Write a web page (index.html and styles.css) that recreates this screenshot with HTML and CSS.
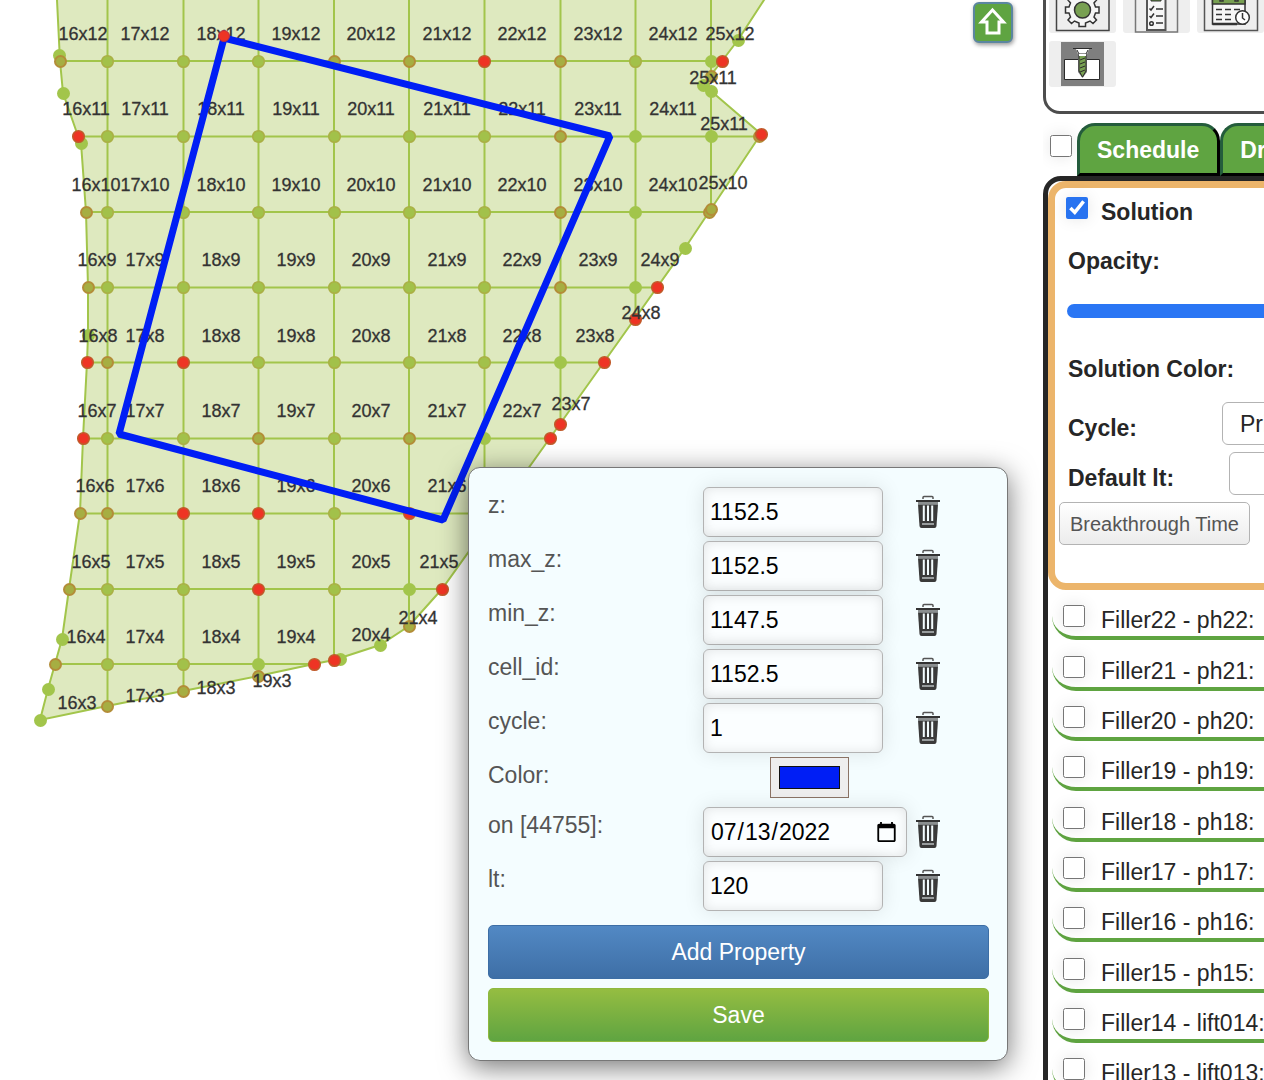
FILE: index.html
```html
<!DOCTYPE html>
<html lang="en">
<head>
<meta charset="utf-8">
<title>Cell schedule</title>
<link rel="stylesheet" href="styles.css">
</head>
<body>
<svg class="defs" aria-hidden="true">
  <symbol id="trash" viewBox="0 0 26 34">
    <path d="M8 4V2.500Q8 1.500 9 1.500H17Q18 1.500 18 2.500V4" fill="none" stroke="#555" stroke-width="1.500"/>
    <path d="M1 5H25V7H1Z" fill="#333"/>
    <path d="M3 7H23V9.500H3Z" fill="#8b8f90"/>
    <path d="M3 9.500H23L21.500 31Q21.300 33 19.500 33H6.500Q4.700 33 4.500 31Z" fill="#3a3a3a"/>
    <path d="M8.800 10.500V26M13 10.500V26M17.200 10.500V26" stroke="#f4fdff" stroke-width="2"/>
    <path d="M7 29H19" stroke="#b9bebf" stroke-width="1.500"/>
  </symbol>
</svg>
<div class="app">
  <main class="map">
    <svg class="field" width="800" height="740" viewBox="0 0 800 740" role="img" aria-label="Cell grid">
      <defs>
        <marker id="n-green" markerUnits="userSpaceOnUse" markerWidth="16" markerHeight="16" refX="7.500" refY="7.500"><circle cx="8" cy="8" r="6.500" fill="#a2c54b"/></marker>
        <marker id="n-olive" markerUnits="userSpaceOnUse" markerWidth="16" markerHeight="16" refX="7.500" refY="7.500"><circle cx="8" cy="8" r="5.800" fill="#a2c14a" stroke="#aab045" stroke-width="1.500"/></marker>
        <marker id="n-brown" markerUnits="userSpaceOnUse" markerWidth="16" markerHeight="16" refX="7.500" refY="7.500"><circle cx="8" cy="8" r="5.500" fill="#a6ae42" stroke="#b38d38" stroke-width="2"/></marker>
        <marker id="n-red" markerUnits="userSpaceOnUse" markerWidth="16" markerHeight="16" refX="7.500" refY="7.500"><circle cx="8" cy="8" r="5.800" fill="#ee3424" stroke="#c05a2a" stroke-width="1.500"/></marker>
        <clipPath id="area"><path d="M57 0L60 61 63 93 78 136 81 143 86 212 88 287 88 335 87 362 83 438 80 513 69 589 62 639 55 664 48 689 40 720 107 706 183 691 258 676 314 664 334 660 380 645 409 626 442 589 550 438 604 362 685 248 761 134 711 91 703 85 722 61 738 40 764 0Z"/></clipPath>
      </defs>
      <path class="land" d="M57 -5L57 0 60 61 63 93 78 136 81 143 86 212 88 287 88 335 87 362 83 438 80 513 69 589 62 639 55 664 48 689 40 720 107 706 183 691 258 676 314 664 334 660 380 645 409 626 442 589 550 438 604 362 685 248 761 134 711 91 703 85 722 61 738 40 764 0 768 -5Z"/>
      <path class="grid" clip-path="url(#area)" d="M107.500 0V740M183.500 0V740M258.500 0V740M334 0V740M409 0V740M484.500 0V740M560.500 0V740M635.500 0V740M711 0V740M0 61H800M0 136.500H800M0 212H800M0 287.500H800M0 362.500H800M0 438.500H800M0 513.500H800M0 589H800M0 664H800"/>
      <path class="nodes green" d="M59 55L63 93 738 40 711 61 703 85 711 91 81 143 635 136 711 136 635 212 685 248 635 287 88 335 560 362 484 438 409 589 258 664 340 659 380 645 62 639 48 689 40 720"/>
      <path class="nodes olive" d="M107 61L183 61 258 61 635 61 107 136 183 136 258 136 334 136 409 136 484 136 107 212 183 212 258 212 334 212 409 212 484 212 107 287 183 287 258 287 334 287 409 287 484 287 258 362 334 362 409 362 484 362 107 438 183 438 334 438 334 513 107 589 183 589 334 589 107 664 183 664"/>
      <path class="nodes brown" d="M60 61L334 61 409 61 560 61 711 76 560 136 759 136 86 212 560 212 709 212 711 209 88 287 560 287 107 362 258 438 409 438 80 513 107 513 69 589 55 664 258 676 409 626 107 706 183 691"/>
      <path class="nodes red" d="M484 61L722 61 78 136 761 134 657 287 635 319 87 362 183 362 604 362 83 438 560 424 550 438 183 513 258 513 409 513 258 589 442 589 314 664 334 660"/>
      <g class="cells">
        <text x="83" y="40">16x12</text><text x="145" y="40">17x12</text><text x="221" y="40">18x12</text><text x="296" y="40">19x12</text><text x="371" y="40">20x12</text><text x="447" y="40">21x12</text><text x="522" y="40">22x12</text><text x="598" y="40">23x12</text><text x="673" y="40">24x12</text><text x="730" y="40">25x12</text>
        <text x="713" y="84">25x11</text>
        <text x="86" y="115">16x11</text><text x="145" y="115">17x11</text><text x="221" y="115">18x11</text><text x="296" y="115">19x11</text><text x="371" y="115">20x11</text><text x="447" y="115">21x11</text><text x="522" y="115">22x11</text><text x="598" y="115">23x11</text><text x="673" y="115">24x11</text><text x="724" y="130">25x11</text>
        <text x="96" y="191">16x10</text><text x="145" y="191">17x10</text><text x="221" y="191">18x10</text><text x="296" y="191">19x10</text><text x="371" y="191">20x10</text><text x="447" y="191">21x10</text><text x="522" y="191">22x10</text><text x="598" y="191">23x10</text><text x="673" y="191">24x10</text><text x="723" y="189">25x10</text>
        <text x="97" y="266">16x9</text><text x="145" y="266">17x9</text><text x="221" y="266">18x9</text><text x="296" y="266">19x9</text><text x="371" y="266">20x9</text><text x="447" y="266">21x9</text><text x="522" y="266">22x9</text><text x="598" y="266">23x9</text><text x="660" y="266">24x9</text>
        <text x="641" y="319">24x8</text>
        <text x="98" y="342">16x8</text><text x="145" y="342">17x8</text><text x="221" y="342">18x8</text><text x="296" y="342">19x8</text><text x="371" y="342">20x8</text><text x="447" y="342">21x8</text><text x="522" y="342">22x8</text><text x="595" y="342">23x8</text>
        <text x="97" y="417">16x7</text><text x="145" y="417">17x7</text><text x="221" y="417">18x7</text><text x="296" y="417">19x7</text><text x="371" y="417">20x7</text><text x="447" y="417">21x7</text><text x="522" y="417">22x7</text><text x="571" y="410">23x7</text>
        <text x="95" y="492">16x6</text><text x="145" y="492">17x6</text><text x="221" y="492">18x6</text><text x="296" y="492">19x6</text><text x="371" y="492">20x6</text><text x="447" y="492">21x6</text>
        <text x="91" y="568">16x5</text><text x="145" y="568">17x5</text><text x="221" y="568">18x5</text><text x="296" y="568">19x5</text><text x="371" y="568">20x5</text><text x="439" y="568">21x5</text>
        <text x="86" y="643">16x4</text><text x="145" y="643">17x4</text><text x="221" y="643">18x4</text><text x="296" y="643">19x4</text><text x="371" y="641">20x4</text><text x="418" y="624">21x4</text>
        <text x="77" y="709">16x3</text><text x="145" y="702">17x3</text><text x="216" y="694">18x3</text><text x="272" y="687">19x3</text>
      </g>
      <path class="shape" d="M224 38L610 136 443 520 119 434Z"/>
      <circle cx="224" cy="36" r="5.500" fill="#ee3424" stroke="#b0304a" stroke-width="1"/>
    </svg>

    <button class="up" type="button" aria-label="Up">
      <svg width="36" height="36" viewBox="0 0 36 36"><path d="M17.500 5L28.500 17H24V28H12V17H6.500Z" fill="none" stroke="#fff" stroke-width="3"/></svg>
    </button>

    <form class="popup">
      <div class="prop"><label for="z">z:</label><input id="z" type="text" value="1152.5"><button type="button" class="del" aria-label="Delete z"><svg><use href="#trash"/></svg></button></div>
      <div class="prop"><label for="max_z">max_z:</label><input id="max_z" type="text" value="1152.5"><button type="button" class="del" aria-label="Delete max_z"><svg><use href="#trash"/></svg></button></div>
      <div class="prop"><label for="min_z">min_z:</label><input id="min_z" type="text" value="1147.5"><button type="button" class="del" aria-label="Delete min_z"><svg><use href="#trash"/></svg></button></div>
      <div class="prop"><label for="cell_id">cell_id:</label><input id="cell_id" type="text" value="1152.5"><button type="button" class="del" aria-label="Delete cell_id"><svg><use href="#trash"/></svg></button></div>
      <div class="prop"><label for="cyc">cycle:</label><input id="cyc" type="text" value="1"><button type="button" class="del" aria-label="Delete cycle"><svg><use href="#trash"/></svg></button></div>
      <div class="prop color"><label for="color">Color:</label><input id="color" type="color" value="#001ef5"></div>
      <div class="prop"><label for="on">on [44755]:</label><input id="on" type="date" value="2022-07-13"><button type="button" class="del" aria-label="Delete on"><svg><use href="#trash"/></svg></button></div>
      <div class="prop"><label for="lt">lt:</label><input id="lt" type="text" value="120"><button type="button" class="del" aria-label="Delete lt"><svg><use href="#trash"/></svg></button></div>
      <button type="button" class="action add">Add Property</button>
      <button type="submit" class="action save">Save</button>
    </form>
  </main>

  <aside class="side">
    <div class="wide">
      <div class="tools">
        <button type="button" class="tool" aria-label="Settings">
          <svg width="67" height="46" viewBox="0 0 67 46" fill="none" stroke="#444" stroke-width="1.500"><path d="M7.500 0V43.500H60V0"/><path d="M30 39V36L25.500 34 22.500 36.500 19 33 21.500 30 20 26H16.500V20H20L21.500 16 19 13 22.500 9.500 25.500 12 30 10V6H36.500V10L41 12 44 9.500 47.500 13 45 16 46.500 20H50V26H46.500L45 30 47.500 33 44 36.500 41 34 36.500 36V39.500H30Z" fill="#f6f6f6" stroke="#333"/><circle cx="33.500" cy="23" r="8" fill="#78a052" stroke="#333"/></svg>
        </button>
        <button type="button" class="tool" aria-label="Checklist">
          <svg width="67" height="46" viewBox="0 0 67 46" fill="none" stroke="#777" stroke-width="1.500"><path d="M12.500 0V45H54.500V0"/><path d="M24 0V43H42.500V0Z" fill="#f6f6f6" stroke="#555" stroke-width="2"/><path d="M28 10H38V14H28Z" fill="#5c8a3c" stroke="#333" stroke-width="1"/><path d="M26.500 21.500L28 23 31 19M26.500 29L28 30.500 31 26.500M33 22H40M33 29H40M33 36H40" stroke="#333"/><circle cx="28.500" cy="36.500" r="1.800" stroke="#333"/></svg>
        </button>
        <button type="button" class="tool" aria-label="Calendar">
          <svg width="67" height="46" viewBox="0 0 67 46" fill="none" stroke="#333" stroke-width="1.500"><path d="M7.500 0V43.500H60.500V0" stroke="#555"/><path d="M15.500 0V37H48V0Z" fill="#f6f6f6"/><path d="M15.500 0V17H48V0Z" fill="#78a052"/><path d="M23 12V14H26V12M38 12V14H41V12M19 22.500H25M28 22.500H34M37 22.500H43M19 27.500H25M28 27.500H34M19 32.500H25M28 32.500H34"/><path d="M15.500 37H40" stroke-width="2.500"/><circle cx="45.500" cy="30.500" r="6.800" fill="#fff"/><path d="M45.500 26V31L48 33"/></svg>
        </button>
        <button type="button" class="tool" aria-label="Drill">
          <svg width="67" height="46" viewBox="0 0 67 46" fill="none" stroke="#2b2b2b" stroke-width="1"><path d="M12 1H55V45H12Z" fill="#7f7f7f" stroke="none"/><path d="M15.500 18.500H50.500V38.500H15.500Z" fill="#fff"/><path d="M29 18H38V31L33.500 37 29 31Z" fill="#7f7f7f" stroke="none"/><path d="M27 8H40L38 13H29Z" fill="#fff" stroke="none"/><path d="M24 7.500H43M28 9L30 13H37L39 9"/><path d="M30 13.500H37V30L33.500 36 30 30Z" fill="#78a052"/><path d="M31 19L36 17M31 23L36 21M31 27L36 25M31 31L36 29"/><path d="M30 13H37V15H30Z" fill="#fff" stroke="none"/></svg>
        </button>
      </div>

      <div class="tabs">
        <input type="checkbox" aria-label="Show all">
        <button type="button" class="tab">Schedule</button><button type="button" class="tab">Drawing</button>
      </div>

      <section class="panel">
        <div class="card">
          <div class="head"><input id="sol" type="checkbox" checked><label for="sol">Solution</label></div>
          <div class="row"><label for="opacity">Opacity:</label></div>
          <div class="row slider"><input id="opacity" type="range" value="100"></div>
          <div class="row tall"><span>Solution Color:</span></div>
          <div class="field-row"><label for="cycle">Cycle:</label><select id="cycle"><option>Primary</option></select></div>
          <div class="field-row"><label for="dlt">Default lt:</label><input id="dlt" class="narrow" type="text"></div>
          <button type="button" class="break">Breakthrough Time</button>
        </div>
        <ul class="fillers">
          <li><input id="f22" type="checkbox"><label for="f22">Filler22 - ph22:</label></li>
          <li><input id="f21" type="checkbox"><label for="f21">Filler21 - ph21:</label></li>
          <li><input id="f20" type="checkbox"><label for="f20">Filler20 - ph20:</label></li>
          <li><input id="f19" type="checkbox"><label for="f19">Filler19 - ph19:</label></li>
          <li><input id="f18" type="checkbox"><label for="f18">Filler18 - ph18:</label></li>
          <li><input id="f17" type="checkbox"><label for="f17">Filler17 - ph17:</label></li>
          <li><input id="f16" type="checkbox"><label for="f16">Filler16 - ph16:</label></li>
          <li><input id="f15" type="checkbox"><label for="f15">Filler15 - ph15:</label></li>
          <li><input id="f14" type="checkbox"><label for="f14">Filler14 - lift014:</label></li>
          <li><input id="f13" type="checkbox"><label for="f13">Filler13 - lift013:</label></li>
        </ul>
      </section>
    </div>
  </aside>
</div>
</body>
</html>
```

FILE: styles.css
```css
* { box-sizing: border-box; }

body {
  margin: 0;
  background: #fff;
  color: #262626;
  font: 23px/28px "Liberation Sans", Arial, sans-serif;
}

button, input, select { font: inherit; margin: 0; }
.defs { display: none; }

.app { display: flex; height: 100vh; overflow: hidden; }
.map { position: relative; flex: 1; min-width: 0; }

/* map drawing */
.field { display: block; }
.land { fill: #dee9bf; stroke: #a2c54b; stroke-width: 2; }
.grid { fill: none; stroke: #a2c54b; stroke-width: 2; }
.nodes { fill: none; stroke: none; }
.green { marker: url(#n-green); }
.olive { marker: url(#n-olive); }
.brown { marker: url(#n-brown); }
.red { marker: url(#n-red); }
.cells { font-size: 18px; fill: #333; stroke: #333; stroke-width: .3; text-anchor: middle; }
.shape { fill: none; stroke: #001ef5; stroke-width: 7; stroke-linejoin: bevel; }

.up {
  position: absolute;
  top: 2px;
  right: 30px;
  padding: 0;
  width: 40px;
  height: 41px;
  border: 2px solid #5b86a0;
  border-radius: 6px;
  background: #5fa441;
  box-shadow: 1px 2px 4px rgba(0, 0, 0, .4);
}
.up svg { display: block; }

/* property editor */
.popup {
  position: absolute;
  top: 467px;
  right: 35px;
  width: 540px;
  padding: 19px 18px 18px 19px;
  border: 1px solid #777;
  border-radius: 12px;
  background: #f4fdff;
  box-shadow: 0 6px 28px rgba(0, 0, 0, .55);
}
.prop {
  display: grid;
  grid-template-columns: 215px 203px 1fr;
  align-items: start;
  min-height: 50px;
  margin-bottom: 4px;
  color: #555;
}
.prop label { padding-top: 4px; }
.prop.color { min-height: 46px; }
.prop input {
  width: 180px;
  height: 50px;
  padding: 0 6px;
  border: 1px solid #b3b3b3;
  border-radius: 6px;
  background: #fbfeff;
  color: #000;
  box-shadow: 0 0 20px rgba(0, 0, 0, .1), inset 0 0 12px rgba(0, 0, 0, .1);
}
.prop input[type="date"] { width: 204px; padding-right: 6px; }
.prop input[type="color"] {
  justify-self: center;
  width: 79px;
  height: 41px;
  margin-left: 10px;
  padding: 4px 6px;
  border: 1px solid #8b7365;
  border-radius: 0;
  background: #eee;
  box-shadow: none;
}
.prop input[type="color"]::-webkit-color-swatch { border: 1px solid #111; }
.del {
  display: block;
  margin: 8px 0 0 9px;
  padding: 0;
  width: 26px;
  border: 0;
  background: none;
}
.del svg { display: block; width: 26px; height: 34px; }
.action {
  display: block;
  width: 100%;
  height: 54px;
  border: 1px solid #3d6ea5;
  border-radius: 5px;
  color: #fff;
}
.add { margin-top: 14px; background: linear-gradient(#5289c4, #3e6fa6); }
.save { margin-top: 9px; border-color: #8fb93f; background: linear-gradient(#95bd41, #5fa441); }

/* side panels */
.side { flex: 0 0 221px; min-width: 0; overflow: hidden; }
.wide { width: 340px; }
.side input[type="checkbox"] {
  flex: none;
  width: 22px;
  height: 22px;
  accent-color: #2873f0;
  box-shadow: 0 0 16px rgba(0, 0, 0, .1);
}
.tools {
  display: flex;
  flex-wrap: wrap;
  gap: 8px 7px;
  width: 300px;
  height: 134px;
  margin-top: -20px;
  padding: 4px 3px;
  align-content: flex-start;
  border: 3px solid #4d4d4d;
  border-radius: 17px;
}
.tool { width: 67px; height: 46px; padding: 0; border: 0; border-radius: 3px; background: #eee; }
.tool svg { display: block; }

.tabs { display: flex; margin-top: 9px; height: 53px; padding-left: 7px; }
.tabs input { margin: 12px 5px 0 0; }
.tab {
  padding: 0 18px 0 17px;
  border: 3px solid #000;
  border-top-color: #245c3c;
  border-left-color: #245c3c;
  border-radius: 18px 18px 0 0;
  background: #5fa441;
  color: #fff;
  font-weight: bold;
}

.panel { border: 5px solid #262626; border-radius: 18px; }
.card {
  padding: 0 4px 38px;
  border: 7px solid #ecb56b;
  border-radius: 18px;
  font-weight: bold;
}
.head { display: flex; align-items: center; gap: 13px; height: 48px; padding-left: 7px; }
.head input { margin-bottom: 8px; }
.row { display: flex; align-items: center; height: 50px; padding-left: 9px; }
.row.tall { height: 66px; }
.slider { padding-left: 8px; }
.slider input {
  width: 250px;
  height: 14px;
  appearance: none;
  border-radius: 7px;
  background: #2a76f4;
}
.field-row { display: flex; align-items: center; justify-content: space-between; height: 43px; margin-bottom: 7px; padding-left: 9px; }
.field-row label { padding-top: 8px; }
.field-row select, .field-row input {
  width: 145px;
  height: 43px;
  padding: 0 17px;
  border: 1px solid #b3b3b3;
  border-radius: 6px;
  background: #fff;
  color: #262626;
  appearance: none;
  font-weight: normal;
}
.field-row .narrow { width: 138px; }
.break {
  height: 43px;
  padding: 0 10px;
  border: 1px solid #b3b3b3;
  border-radius: 5px;
  background: linear-gradient(#fff, #ececec);
  color: #555;
  font-size: 20px;
  font-weight: normal;
}

.fillers { list-style: none; margin: 0; padding: 0 0 0 4px; white-space: nowrap; }
.fillers li {
  display: flex;
  align-items: center;
  gap: 16px;
  height: 50px;
  padding: 14px 0 0 11px;
  border-bottom: 4px solid #5fa441;
  border-bottom-left-radius: 24px;
}
.fillers li:nth-child(3n + 2) { height: 51px; }
.fillers input { margin-bottom: 8px; }
```
